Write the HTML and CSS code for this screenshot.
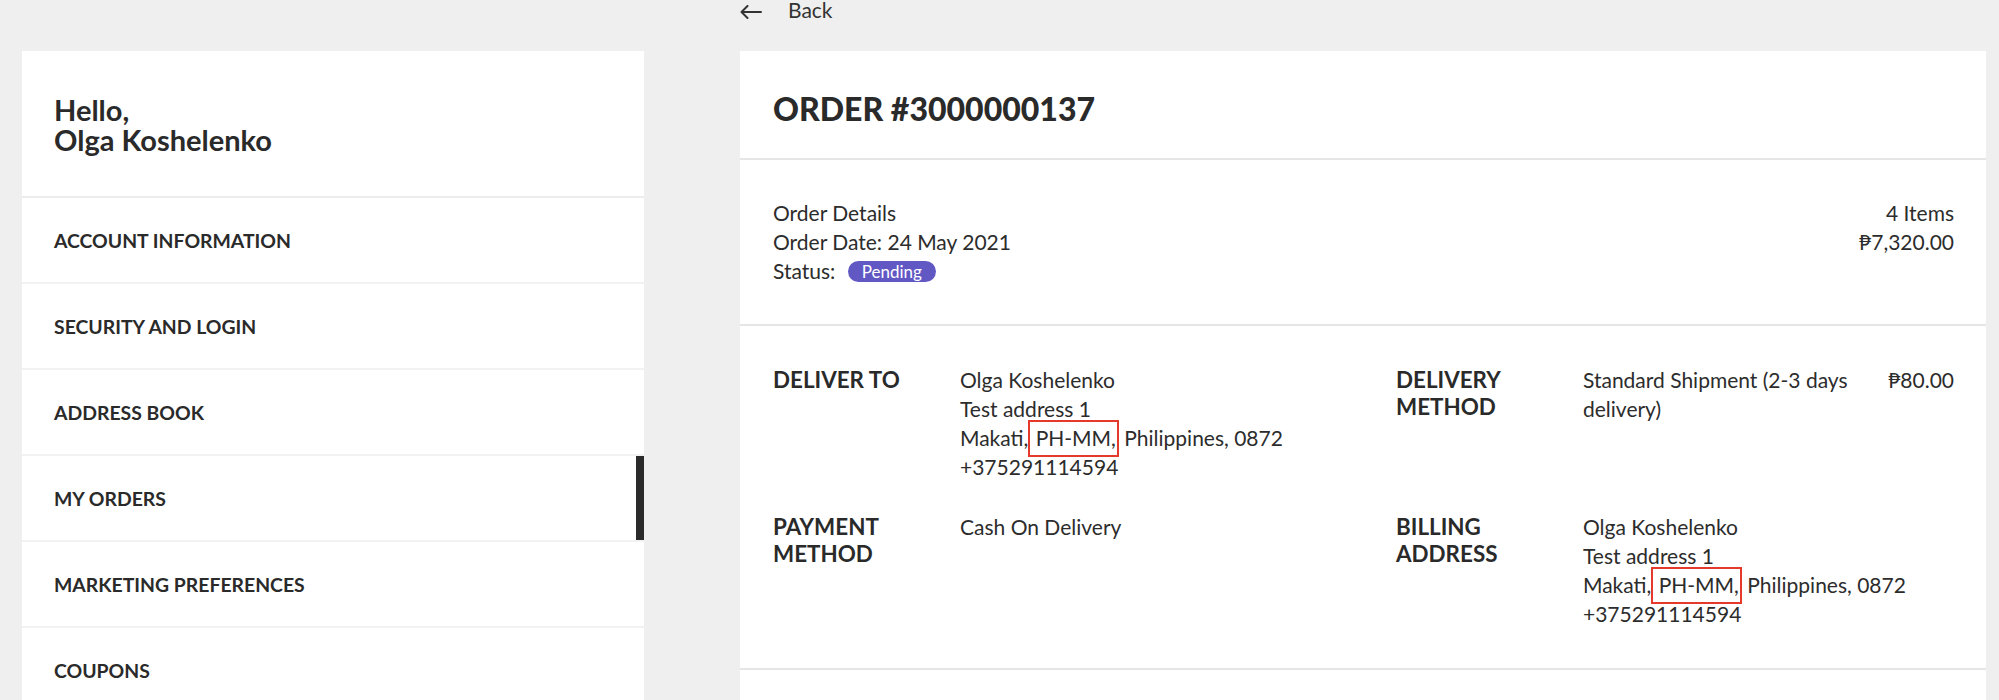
FILE: index.html
```html
<!DOCTYPE html>
<html lang="en">
<head>
<meta charset="utf-8">
<title>Order #3000000137</title>
<link rel="stylesheet" href="styles.css">
</head>
<body>
<div class="page">
  <a class="back" href="#">
    <svg class="back-icon" width="22" height="14" viewBox="0 0 22 14" fill="none" stroke="#333" stroke-width="2" stroke-linecap="round" stroke-linejoin="round"><path d="M21 7H1.5M7.5 1L1.5 7l6 6"/></svg>
    <span class="back-text">Back</span>
  </a>

  <aside class="sidebar">
    <div class="greet">
      <div class="greet-line">Hello,</div>
      <div class="greet-line">Olga Koshelenko</div>
    </div>
    <nav class="menu">
      <a class="menu-item" href="#">ACCOUNT INFORMATION</a>
      <a class="menu-item" href="#">SECURITY AND LOGIN</a>
      <a class="menu-item" href="#">ADDRESS BOOK</a>
      <a class="menu-item is-active" href="#">MY ORDERS</a>
      <a class="menu-item" href="#">MARKETING PREFERENCES</a>
      <a class="menu-item" href="#">COUPONS</a>
    </nav>
  </aside>

  <main class="card">
    <header class="card-head">
      <h1 class="order-title">ORDER #3000000137</h1>
    </header>

    <section class="details">
      <div class="details-left">
        <div class="line">Order Details</div>
        <div class="line">Order Date: 24 May 2021</div>
        <div class="line">Status: <span class="pill">Pending</span></div>
      </div>
      <div class="details-right">
        <div class="line">4 Items</div>
        <div class="line">₱7,320.00</div>
      </div>
    </section>

    <section class="info">
      <div class="info-cell">
        <div class="info-label">DELIVER TO</div>
        <div class="info-value">
          <div class="line">Olga Koshelenko</div>
          <div class="line">Test address 1</div>
          <div class="line">Makati,<span class="hl"> PH-MM,</span> Philippines, 0872</div>
          <div class="line">+375291114594</div>
        </div>
      </div>
      <div class="info-cell">
        <div class="info-label">DELIVERY<br>METHOD</div>
        <div class="info-value split">
          <div class="ship">Standard Shipment (2-3 days delivery)</div>
          <div class="ship-price">₱80.00</div>
        </div>
      </div>
      <div class="info-cell">
        <div class="info-label">PAYMENT<br>METHOD</div>
        <div class="info-value">
          <div class="line">Cash On Delivery</div>
        </div>
      </div>
      <div class="info-cell">
        <div class="info-label">BILLING<br>ADDRESS</div>
        <div class="info-value">
          <div class="line">Olga Koshelenko</div>
          <div class="line">Test address 1</div>
          <div class="line">Makati,<span class="hl"> PH-MM,</span> Philippines, 0872</div>
          <div class="line">+375291114594</div>
        </div>
      </div>
    </section>
    <section class="rest"></section>
  </main>
</div>
</body>
</html>
```

FILE: styles.css
```css
* { box-sizing: border-box; }

html, body {
  margin: 0;
  padding: 0;
}

body {
  background: #efefef;
  color: #2c2c2c;
  font-family: "Lato", "Liberation Sans", sans-serif;
  font-size: 21px;
  height: 700px;
  overflow: hidden;
}

.page {
  display: grid;
  grid-template-columns: 622px 1246px;
  grid-template-rows: 51px auto;
  column-gap: 96px;
  padding-left: 22px;
}

.back {
  grid-column: 2;
  grid-row: 1;
  display: flex;
  align-items: flex-start;
  gap: 26px;
  color: #333;
  text-decoration: none;
  height: 24px;
}

.back-icon {
  margin-top: 5px;
}

.back-text {
  font-size: 21px;
  line-height: 22px;
  margin-top: -1px;
}

.sidebar {
  grid-column: 1;
  grid-row: 2;
  background: #fff;
  height: 649px;
}

.greet {
  padding: 44px 32px 0;
  border-bottom: 2px solid #ececec;
  height: 147px;
}

.greet-line {
  font-size: 29px;
  font-weight: 700;
  line-height: 30px;
  color: #2a2a2a;
}

.menu {
  display: flex;
  flex-direction: column;
}

.menu-item {
  display: flex;
  align-items: center;
  height: 86px;
  padding: 0 32px;
  border-bottom: 2px solid #f2f2f2;
  font-size: 19.4px;
  font-weight: 700;
  color: #2a2a2a;
  text-decoration: none;
}

.menu-item.is-active {
  box-shadow: inset -8px 0 0 #2a2a2a;
}

.card {
  grid-column: 2;
  grid-row: 2;
  background: #fff;
  height: 649px;
}

.card-head {
  height: 109px;
  display: flex;
  align-items: center;
  padding: 7px 33px 0;
  border-bottom: 2px solid #e6e6e6;
}

.order-title {
  margin: 0;
  font-size: 32px;
  font-weight: 900;
  color: #2a2a2a;
}

.line {
  line-height: 29px;
}

.details {
  display: flex;
  justify-content: space-between;
  padding: 38px 32px 39px 33px;
  border-bottom: 2px solid #e6e6e6;
}

.details-right {
  text-align: right;
}

.pill {
  display: inline-block;
  background: #6258c4;
  color: #fff;
  font-size: 17px;
  line-height: 21px;
  height: 21px;
  padding: 0 14px;
  border-radius: 11px;
  margin-left: 7px;
  vertical-align: 1px;
}

.info {
  display: grid;
  grid-template-columns: 1fr 1fr;
  column-gap: 65px;
  row-gap: 31px;
  padding: 39px 32px 40px 33px;
  border-bottom: 2px solid #e6e6e6;
}

.info-cell {
  display: grid;
  grid-template-columns: 187px 1fr;
}

.info-label {
  font-size: 22.4px;
  font-weight: 700;
  line-height: 27px;
  color: #2a2a2a;
  padding-top: 1px;
}

.info-value.split {
  display: flex;
  justify-content: space-between;
  align-items: flex-start;
}

.ship {
  max-width: 295px;
  line-height: 29px;
}

.ship-price {
  line-height: 29px;
}

.hl {
  border: 2px solid #e5392b;
  padding: 3px 1px 5px 0;
}
```
